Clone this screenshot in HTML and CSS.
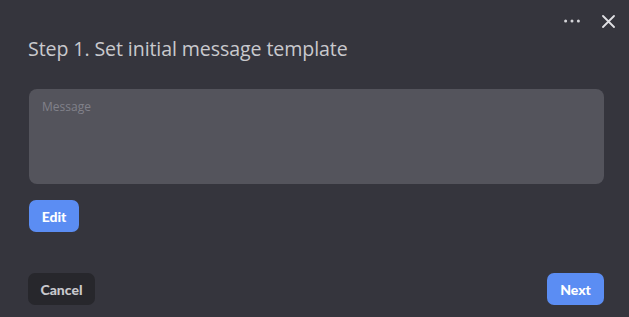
FILE: index.html
```html
<!DOCTYPE html>
<html>
<head>
<meta charset="utf-8">
<link rel="stylesheet" href="styles.css">
</head>
<body>
<div class="modal">
  <div class="toolbar">
    <span class="tool more" aria-label="More">
      <svg width="16" height="4" viewBox="0 0 16 4"><circle cx="1.6" cy="2" r="1.5" fill="#d4d4d8"/><circle cx="8" cy="2" r="1.5" fill="#d4d4d8"/><circle cx="14.4" cy="2" r="1.5" fill="#d4d4d8"/></svg>
    </span>
    <span class="tool close" aria-label="Close">
      <svg width="13" height="13" viewBox="0 0 13 13"><path d="M1 1L12 12M12 1L1 12" stroke="#e0e0e4" stroke-width="1.8" stroke-linecap="round"/></svg>
    </span>
  </div>
  <h1 class="title">Step 1. Set initial message template</h1>
  <div class="message">
    <span class="placeholder">Message</span>
  </div>
  <div class="edit-row">
    <button class="btn btn-primary btn-edit">Edit</button>
  </div>
  <div class="footer">
    <button class="btn btn-dark">Cancel</button>
    <button class="btn btn-primary">Next</button>
  </div>
</div>
</body>
</html>
```
FILE: styles.css
```css
html, body {
  margin: 0;
  padding: 0;
  background: #35353d;
  width: 629px;
  height: 317px;
  overflow: hidden;
}
.modal {
  box-sizing: border-box;
  width: 629px;
  height: 317px;
  padding: 0 25px 12px 28px;
  display: flex;
  flex-direction: column;
  font-family: "Open Sans", "Noto Sans", sans-serif;
}
.toolbar {
  display: flex;
  justify-content: flex-end;
  align-items: center;
  gap: 22px;
  height: 14px;
  margin-top: 14px;
  margin-right: -11px;
}
.tool {
  display: flex;
  align-items: center;
}
.title {
  margin: 8px 0 0 0;
  font-size: 19.6px;
  font-weight: 400;
  color: #c9c9cd;
  line-height: 26px;
  letter-spacing: -0.1px;
}
.message {
  margin-top: 27px;
  margin-left: 1px;
  height: 95px;
  background: #54545c;
  border-radius: 8px;
  padding: 5px 13px;
  box-sizing: border-box;
}
.placeholder {
  font-size: 12px;
  color: #81818a;
  line-height: 16px;
}
.edit-row {
  margin-top: 16px;
  margin-left: 1px;
}
.btn {
  height: 32px;
  border: none;
  border-radius: 7px;
  font-family: "Lato", "Inter", sans-serif;
  font-weight: 900;
  font-size: 14px;
  padding: 0;
  cursor: pointer;
}
.btn-primary {
  background: #5b8df3;
  color: #ffffff;
}
.btn-edit {
  width: 50px;
}
.btn-dark {
  background: #27272c;
  color: #c8c8cc;
  width: 67px;
}
.footer {
  margin-top: auto;
  display: flex;
  justify-content: space-between;
  align-items: center;
}
.footer .btn-primary {
  width: 57px;
}
```
